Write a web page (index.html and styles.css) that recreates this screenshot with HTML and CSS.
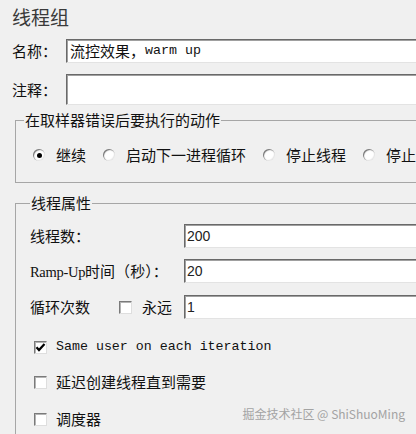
FILE: index.html
```html
<!DOCTYPE html>
<html lang="zh-CN">
<head>
<meta charset="utf-8">
<title>线程组</title>
<link rel="stylesheet" href="styles.css">
</head>
<body>
<div class="page">
  <div class="title">线程组</div>

  <div class="row row-name">
    <span class="lbl">名称<span class="colon">：</span></span>
    <div class="field"><span class="cjk">流控效果<span class="colon">，</span></span><span class="mono">warm up</span></div>
  </div>

  <div class="row row-comment">
    <span class="lbl">注释<span class="colon">：</span></span>
    <div class="field field-tall"></div>
  </div>

  <fieldset class="group group-error">
    <legend>在取样器错误后要执行的动作</legend>
    <div class="radios">
      <span class="opt"><span class="radio checked"></span>继续</span>
      <span class="opt"><span class="radio"></span>启动下一进程循环</span>
      <span class="opt"><span class="radio"></span>停止线程</span>
      <span class="opt"><span class="radio"></span>停止</span>
    </div>
  </fieldset>

  <fieldset class="group group-props">
    <legend>线程属性</legend>
    <div class="frow">
      <span class="flbl">线程数<span class="colon">：</span></span>
      <div class="field num">200</div>
    </div>
    <div class="frow frow-2">
      <span class="flbl"><span class="latin">Ramp-Up</span>时间<span class="colon">（</span>秒<span class="colon">）：</span></span>
      <div class="field num">20</div>
    </div>
    <div class="frow frow-3">
      <span class="flbl loop"><span>循环次数</span><span class="box loop-box"></span><span class="forever">永远</span></span>
      <div class="field num">1</div>
    </div>

    <div class="crow crow-1">
      <span class="box checked"><svg viewBox="0 0 13 13" width="13" height="13"><path d="M2.5 6.2 L5 9 L10.5 3" fill="none" stroke="#000" stroke-width="2.2"/></svg></span>
      <span class="mono">Same user on each iteration</span>
    </div>
    <div class="crow crow-2">
      <span class="box"></span>
      <span>延迟创建线程直到需要</span>
    </div>
    <div class="crow crow-3">
      <span class="box"></span>
      <span>调度器</span>
    </div>
  </fieldset>
</div>
<div class="watermark">掘金技术社区 @ ShiShuoMing</div>
</body>
</html>
```

FILE: styles.css
```css
html, body {
  margin: 0;
  padding: 0;
  overflow: hidden;
  background: #f0f0f0;
}

body {
  position: relative;
  width: 416px;
  height: 434px;
  font-family: "Noto Sans CJK SC", "Microsoft YaHei", sans-serif;
  font-size: 15px;
  color: #111;
}

.page {
  width: 470px;
}

.title {
  font-size: 19px;
  line-height: 26px;
  height: 26px;
  padding: 4px 0 0 12px;
  color: #3a3a3a;
}

.colon {
  font-family: "Noto Sans CJK TC", "Noto Sans CJK SC", sans-serif;
}

.row {
  display: flex;
  align-items: center;
  padding-left: 12px;
}

.row-name {
  margin-top: 9px;
  height: 24px;
}

.row-comment {
  margin-top: 11px;
  height: 31px;
}

.lbl {
  width: 54px;
  flex: none;
  line-height: 20px;
}

.field {
  flex: 1;
  box-sizing: border-box;
  height: 24px;
  background: #fff;
  border-top: 1px solid #696969;
  border-left: 1px solid #696969;
  border-bottom: 1px solid #e3e3e3;
  border-right: 1px solid #e3e3e3;
  box-shadow: inset 1px 1px 0 #a0a0a0;
  padding: 0 3px;
  display: flex;
  align-items: center;
  white-space: nowrap;
  line-height: 20px;
}

.field-tall {
  height: 31px;
}

.mono {
  font-family: "Liberation Mono", "Courier New", monospace;
  font-size: 13.3px;
}

.num {
  font-family: "Liberation Sans", Arial, sans-serif;
  font-size: 14px;
  color: #222;
  padding-left: 2px;
}

.group {
  border: 1px solid #a6a6a6;
  margin: 0 -40px 0 15px;
  min-inline-size: 0;
}

.group legend {
  padding: 0 1px;
  font-size: 15px;
  line-height: 20px;
  color: #111;
}

.group-error {
  margin-top: 5px;
  padding: 15px 0 17px 8px;
}

.group-props {
  margin-top: 10px;
  padding: 11px 0 60px 14px;
}

.radios {
  display: flex;
  align-items: center;
  height: 20px;
  padding-left: 9px;
  white-space: nowrap;
  line-height: 20px;
}

.opt {
  display: flex;
  align-items: center;
  gap: 11px;
  margin-right: 17px;
}

.radio {
  position: relative;
  width: 12px;
  height: 12px;
  flex: none;
  border-radius: 50%;
  background: #fff;
  box-shadow: inset 1px 1px 1px #6f6f6f, inset -1px -1px 1px #e6e6e6;
}

.radio.checked::after {
  content: "";
  position: absolute;
  left: 3.5px;
  top: 3.5px;
  width: 5px;
  height: 5px;
  border-radius: 50%;
  background: #000;
}

.frow {
  display: flex;
  align-items: center;
  height: 24px;
}

.frow-2 {
  margin-top: 11px;
}

.frow-3 {
  margin-top: 12px;
}

.flbl {
  width: 154px;
  flex: none;
  line-height: 20px;
  white-space: nowrap;
}

.latin {
  font-family: "Liberation Serif", "Times New Roman", serif;
  font-size: 14.5px;
  letter-spacing: -0.3px;
}

.loop {
  display: flex;
  align-items: center;
}

.loop-box {
  margin-left: 29px;
}

.forever {
  margin-left: 10px;
}

.box {
  display: block;
  width: 13px;
  height: 13px;
  flex: none;
  box-sizing: border-box;
  background: #fff;
  border-top: 1px solid #7a7a7a;
  border-left: 1px solid #7a7a7a;
  border-bottom: 1px solid #dedede;
  border-right: 1px solid #dedede;
  box-shadow: inset 1px 1px 0 #b4b4b4;
  position: relative;
}

.box svg {
  position: absolute;
  left: -1px;
  top: -1px;
}

.crow {
  display: flex;
  align-items: center;
  gap: 9px;
  height: 20px;
  padding-left: 4px;
  line-height: 20px;
  white-space: nowrap;
}

.crow-1 {
  margin-top: 18px;
}

.crow-2 {
  margin-top: 15px;
}

.crow-3 {
  margin-top: 17px;
}

.watermark {
  position: absolute;
  right: 11px;
  top: 404px;
  font-size: 12px;
  line-height: 20px;
  color: #a3a3a3;
  font-family: "Noto Sans CJK SC", "Liberation Sans", sans-serif;
  white-space: nowrap;
}
```
